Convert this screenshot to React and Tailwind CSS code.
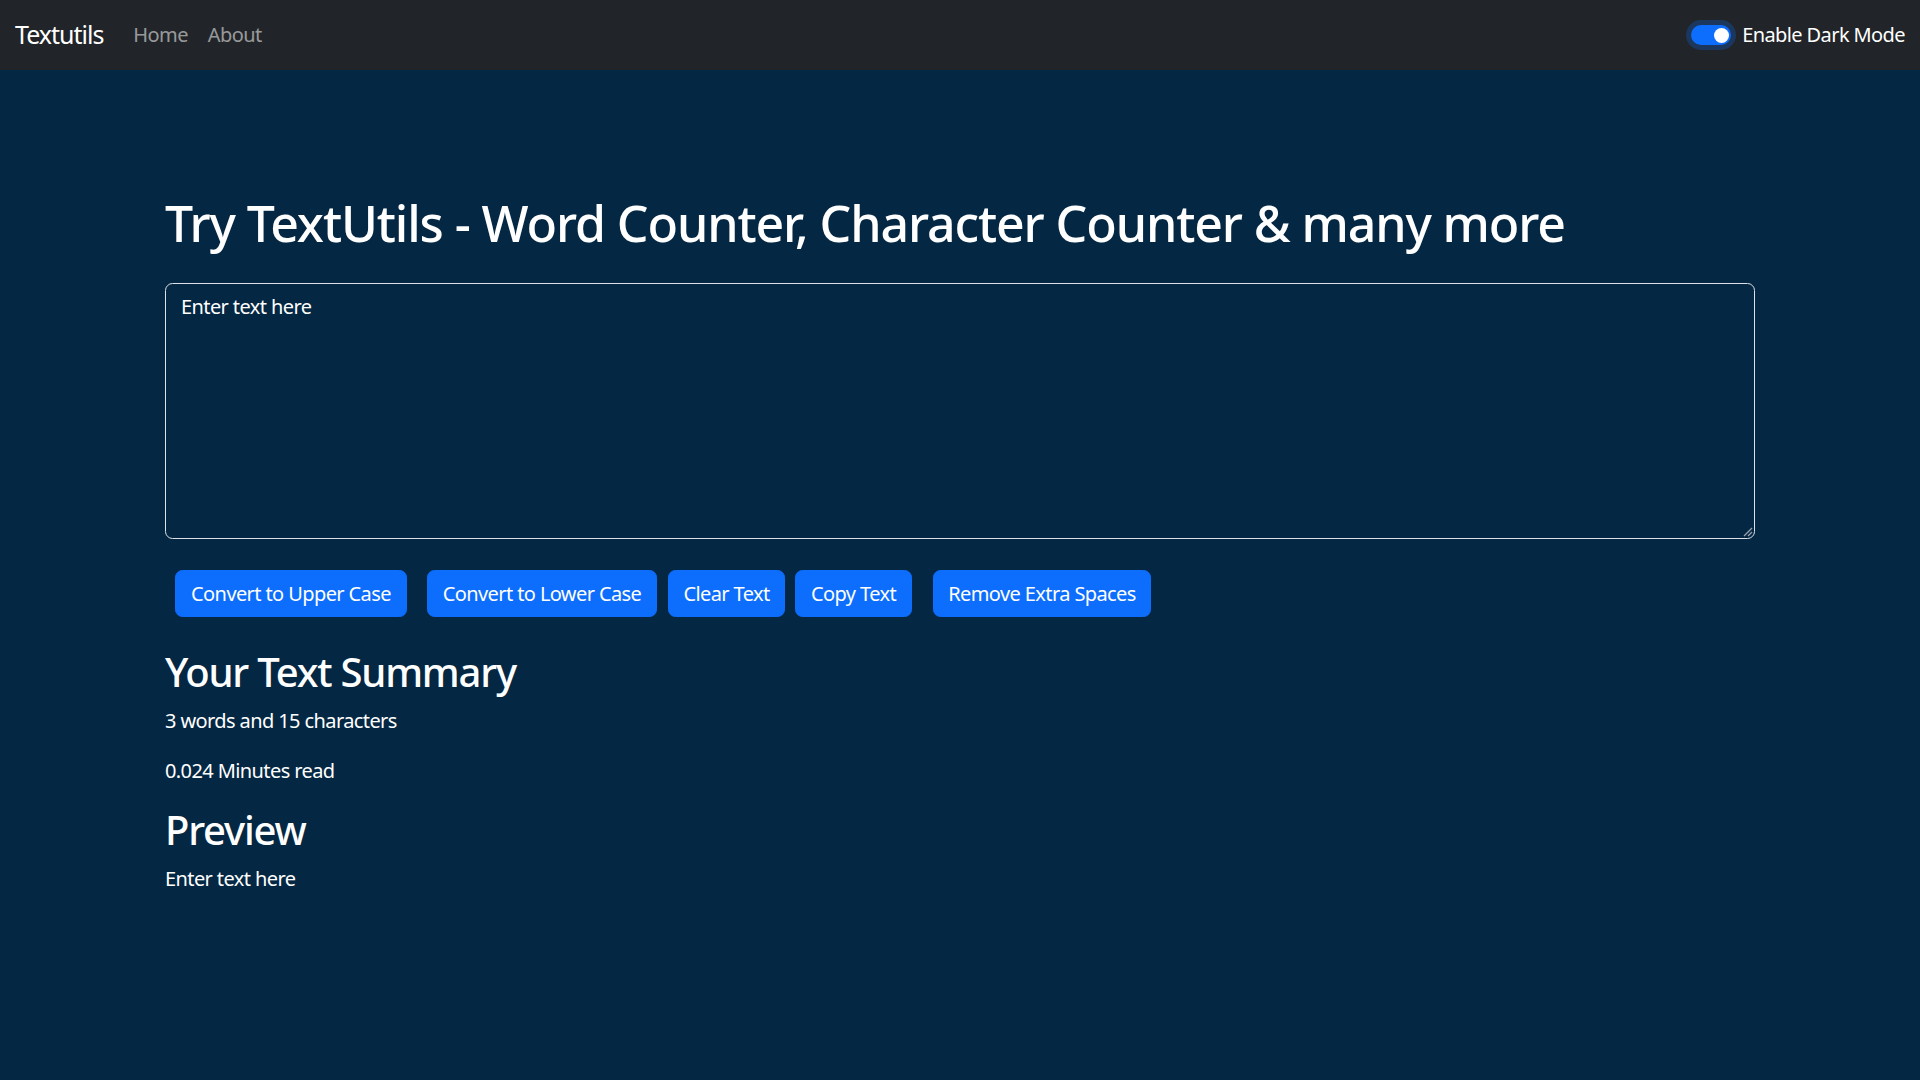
import React from "react";

const ff = "font-['Noto_Sans',sans-serif]";

function Navbar() {
  return (
    <nav className="h-[70px] bg-[#212529] flex items-center justify-between px-[15px]">
      <div className="flex items-center">
        <span className="text-white text-[25px] leading-[37.5px] tracking-[-1px] mr-[20px]">Textutils</span>
        <a className="text-[rgba(255,255,255,0.55)] text-[20px] leading-[30px] tracking-[-0.6px] px-[10px]">Home</a>
        <a className="text-[rgba(255,255,255,0.55)] text-[20px] leading-[30px] tracking-[-0.6px] px-[10px]">About</a>
      </div>
      <div className="flex items-center">
        <div className="relative w-[40px] h-[20px] rounded-full bg-[#0d6efd] shadow-[0_0_0_5px_rgba(13,110,253,0.25)]">
          <div className="absolute right-[2.5px] top-[2.5px] w-[15px] h-[15px] rounded-full bg-white" />
        </div>
        <span className="ml-[11px] text-white text-[20px] leading-[30px] tracking-[-0.6px]">Enable Dark Mode</span>
      </div>
    </nav>
  );
}

const btn =
  "h-[47px] rounded-[7.5px] bg-[#0d6efd] border border-[#0d6efd] text-white text-[20px] leading-[30px] tracking-[-0.6px] text-center";

export default function App() {
  return (
    <div className={`min-h-screen bg-[#042743] ${ff}`}>
      <Navbar />
      <main className="w-[1590px] mx-auto text-white">
        <h1 className="mt-[123px] text-[50px] leading-[60px] font-medium tracking-[-1.1px]">
          Try TextUtils - Word Counter, Character Counter &amp; many more
        </h1>
        <div className="relative mt-[30px]">
          <textarea
            className={`block w-full h-[256px] resize-none bg-[#042743] text-white border border-[#dee2e6] rounded-[7.5px] px-[15px] py-[7.5px] text-[20px] leading-[30px] tracking-[-0.6px] outline-none ${ff}`}
            defaultValue="Enter text here"
          />
          <svg className="absolute right-[2px] bottom-[2px]" width="10" height="10" viewBox="0 0 10 10">
            <line x1="1" y1="9" x2="9" y2="1" stroke="#9aa3ad" strokeWidth="1.2" />
            <line x1="5" y1="9" x2="9" y2="5" stroke="#9aa3ad" strokeWidth="1.2" />
          </svg>
        </div>
        <div className="mt-[31px] flex">
          <button className={`${btn} ml-[10px] w-[232px]`}>Convert to Upper Case</button>
          <button className={`${btn} ml-[20px] w-[230px]`}>Convert to Lower Case</button>
          <button className={`${btn} ml-[11px] w-[117px]`}>Clear Text</button>
          <button className={`${btn} ml-[10px] w-[117px]`}>Copy Text</button>
          <button className={`${btn} ml-[21px] w-[218px]`}>Remove Extra Spaces</button>
        </div>
        <h2 className="mt-[31px] mb-[10px] text-[40px] leading-[48px] font-medium tracking-[-1.2px]">Your Text Summary</h2>
        <p className="mb-[20px] text-[20px] leading-[30px] tracking-[-0.6px]">3 words and 15 characters</p>
        <p className="mb-[20px] text-[20px] leading-[30px] tracking-[-0.6px]">0.024 Minutes read</p>
        <h2 className="mb-[10px] text-[40px] leading-[48px] font-medium tracking-[-1.2px]">Preview</h2>
        <p className="mb-[20px] text-[20px] leading-[30px] tracking-[-0.6px]">Enter text here</p>
      </main>
    </div>
  );
}
